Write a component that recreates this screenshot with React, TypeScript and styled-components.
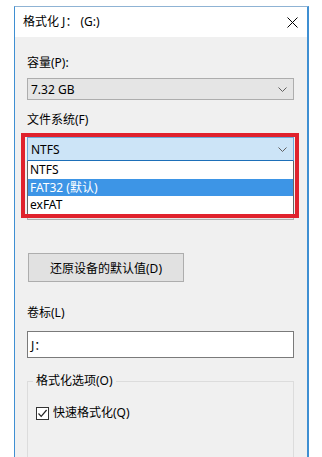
import styled, { createGlobalStyle } from "styled-components";

const GlobalStyle = createGlobalStyle`
  html, body {
    margin: 0;
    padding: 0;
    background: #ffffff;
    overflow: hidden;
  }
  body {
    font-family: "Noto Sans", "Noto Sans CJK SC", sans-serif;
    font-size: 12px;
    color: #000;
  }
`;

const Window = styled.div`
  margin: 6px 0 0 14px;
  width: 292px;
  height: 470px;
  border-top: 1px solid #8fb3d4;
  border-left: 1px solid #3f8fd2;
  border-right: 2px solid #3f8fd2;
  background: #f0f0f0;
  display: flex;
  flex-direction: column;
`;

const TitleBar = styled.div`
  height: 30px;
  background: #ffffff;
  display: flex;
  align-items: center;
  justify-content: space-between;
  padding: 0 9px 0 8px;
`;

const Title = styled.span`
  font-size: 12px;
  line-height: 16px;
`;

const Body = styled.div`
  padding: 18px 13px 0 12px;
  display: flex;
  flex-direction: column;
`;

const Label = styled.div<{ $top: number }>`
  margin-top: ${(p) => p.$top}px;
  line-height: 16px;
  height: 16px;
`;

const Combo = styled.div<{ $top: number; $h: number; $active?: boolean }>`
  margin-top: ${(p) => p.$top}px;
  height: ${(p) => p.$h}px;
  box-sizing: border-box;
  background: ${(p) => (p.$active ? "#cce4f7" : "#e5e5e5")};
  border: 1px solid ${(p) => (p.$active ? "#6da8d9" : "#adadad")};
  border-bottom-color: ${(p) => (p.$active ? "#1d6fb8" : "#adadad")};
  display: flex;
  align-items: center;
  justify-content: space-between;
  padding: 0 6px 0 3px;
`;

const ComboWrap = styled.div`
  position: relative;
  margin-top: 9px;
  display: flex;
  flex-direction: column;
`;

const DropList = styled.ul`
  position: absolute;
  top: 24px;
  left: 0;
  right: 0;
  margin: 0;
  padding: 0;
  list-style: none;
  background: #fff;
  border: 1px solid #646464;
  border-top: none;
  z-index: 2;
`;

const DropItem = styled.li<{ $sel?: boolean }>`
  height: 17.6px;
  line-height: 17px;
  padding-left: 2px;
  background: ${(p) => (p.$sel ? "#3d95e6" : "transparent")};
  color: ${(p) => (p.$sel ? "#fff" : "#000")};
`;

const RedFrame = styled.div`
  position: absolute;
  top: -4px;
  left: -6px;
  right: -5px;
  height: 85px;
  box-sizing: border-box;
  border: 4px solid #e0222d;
  z-index: 3;
  pointer-events: none;
`;

const Button = styled.button`
  margin-top: 33px;
  width: 156px;
  height: 29px;
  margin-left: 1px;
  background: #e1e1e1;
  border: 1px solid #adadad;
  font: inherit;
  color: #000;
  padding: 0;
`;

const TextBox = styled.div`
  margin-top: 10px;
  height: 27px;
  box-sizing: border-box;
  background: #fff;
  border: 1px solid #7a7a7a;
  display: flex;
  align-items: center;
  padding-left: 3px;
`;

const Group = styled.fieldset`
  margin: 15px 0 0 0;
  padding: 0 5px;
  height: 90px;
  border: 1px solid #dcdcdc;
  min-width: 0;
`;

const Legend = styled.legend`
  padding: 0 3px;
  line-height: 16px;
`;

const CheckRow = styled.label`
  margin-top: 16px;
  display: flex;
  align-items: center;
  gap: 4px;
  padding-left: 3px;
  line-height: 16px;
`;

const CheckBox = styled.span`
  width: 13px;
  height: 13px;
  box-sizing: border-box;
  border: 1px solid #333;
  background: #fff;
  display: flex;
  align-items: center;
  justify-content: center;
`;

const Chevron = () => (
  <svg width="9" height="5" viewBox="0 0 9 5">
    <path d="M0.5 0.5 L4.5 4.5 L8.5 0.5" fill="none" stroke="#606060" strokeWidth="1" />
  </svg>
);

const CloseIcon = () => (
  <svg width="11" height="11" viewBox="0 0 11 11">
    <path d="M0.5 0.5 L10.5 10.5 M10.5 0.5 L0.5 10.5" stroke="#000" strokeWidth="1" />
  </svg>
);

const Check = () => (
  <svg width="11" height="11" viewBox="0 0 11 11">
    <path d="M1.5 5.5 L4.2 8.4 L9.6 2" fill="none" stroke="#222" strokeWidth="1.2" />
  </svg>
);

export default function App() {
  return (
    <>
      <GlobalStyle />
      <Window>
        <TitleBar>
          <Title>格式化 J： (G:)</Title>
          <CloseIcon />
        </TitleBar>
        <Body>
          <Label $top={0}>容量(P):</Label>
          <Combo $top={7} $h={22}>
            <span>7.32 GB</span>
            <Chevron />
          </Combo>
          <Label $top={12}>文件系统(F)</Label>
          <ComboWrap>
            <Combo $top={0} $h={24} $active>
              <span>NTFS</span>
              <Chevron />
            </Combo>
            <DropList>
              <DropItem>NTFS</DropItem>
              <DropItem $sel>FAT32 (默认)</DropItem>
              <DropItem>exFAT</DropItem>
            </DropList>
            <RedFrame />
          </ComboWrap>
          {/* allocation-unit combo, hidden behind the open list */}
          <Combo $top={38} $h={21} />
          <Button>还原设备的默认值(D)</Button>
          <Label $top={23}>卷标(L)</Label>
          <TextBox>J：</TextBox>
          <Group>
            <Legend>格式化选项(O)</Legend>
            <CheckRow>
              <CheckBox>
                <Check />
              </CheckBox>
              快速格式化(Q)
            </CheckRow>
          </Group>
        </Body>
      </Window>
    </>
  );
}
